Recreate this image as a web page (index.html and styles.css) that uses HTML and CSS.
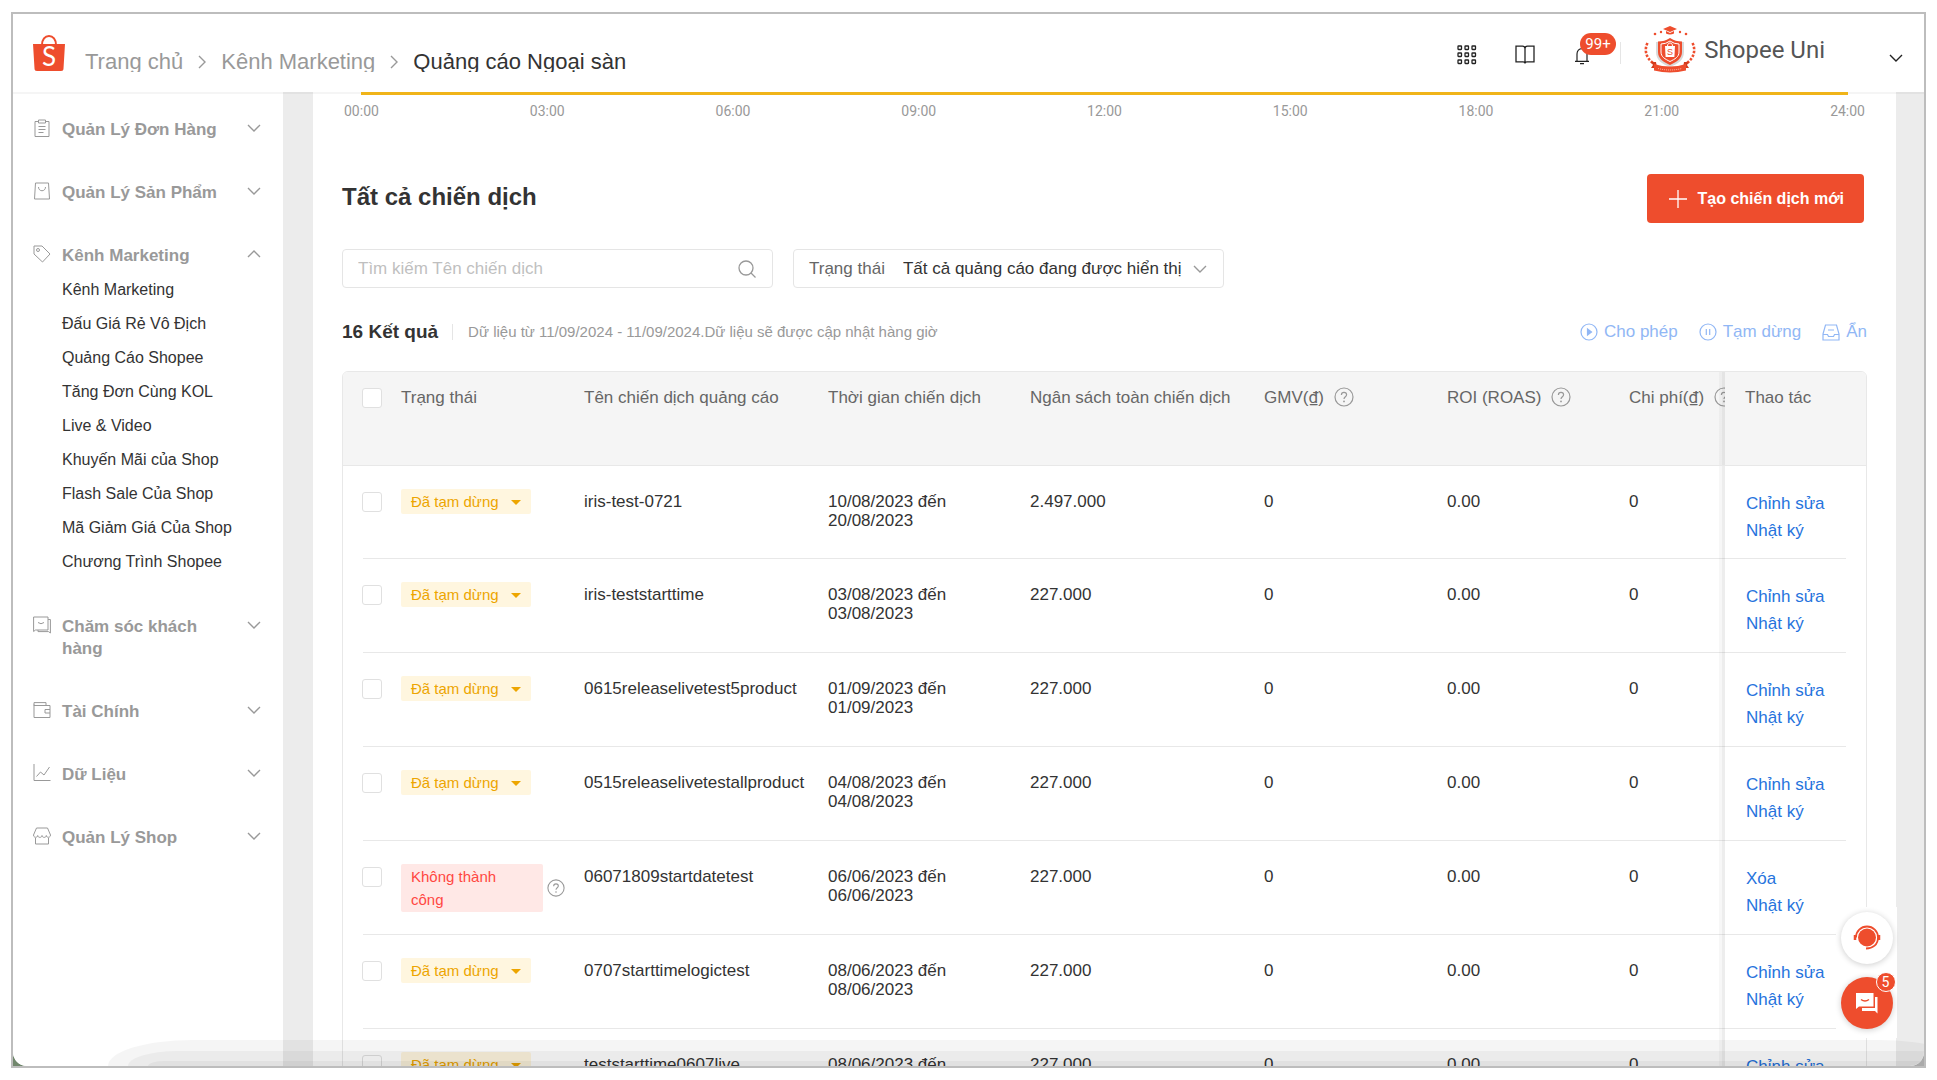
FILE: index.html
```html
<!DOCTYPE html>
<html lang="vi">
<head>
    <meta charset="UTF-8">
    <meta name="viewport" content="width=device-width, initial-scale=1.0">
    <title>Quảng cáo Ngoại sàn</title>
    <link rel="stylesheet" href="styles.css">
</head>
<body>

<!-- Shared icons -->
<svg class="icon-defs" aria-hidden="true">
    <symbol id="chevron-down" viewBox="0 0 14 14"><path d="M1 4l6 6 6-6" fill="none" stroke="currentColor" stroke-width="1.4"/></symbol>
    <symbol id="chevron-up" viewBox="0 0 14 14"><path d="M1 10l6-6 6 6" fill="none" stroke="currentColor" stroke-width="1.4"/></symbol>
    <symbol id="chevron-right" viewBox="0 0 10 14"><path d="M2 1l6 6-6 6" fill="none" stroke="currentColor" stroke-width="1.4"/></symbol>
    <symbol id="help" viewBox="0 0 20 20">
        <circle cx="10" cy="10" r="9" fill="none" stroke="currentColor" stroke-width="1.2"/>
        <path d="M7.4 8c0-1.6 1.1-2.6 2.6-2.6s2.6 1 2.6 2.4c0 1.9-2.6 2-2.6 4.2" fill="none" stroke="currentColor" stroke-width="1.2"/>
        <circle cx="10" cy="14.4" r=".9" fill="currentColor"/>
    </symbol>
</svg>

<div class="frame">
<div class="app">

    <header class="header">
        <a class="logo" href="#" aria-label="Shopee">
            <svg width="32" height="36" viewBox="0 0 32 36">
                <path d="M9 10C9 4.500 12 1 16 1s7 3.500 7 9" fill="none" stroke="#ee4d2d" stroke-width="2"/>
                <path d="M0 9h32l-1.500 24.500a2.500 2.500 0 0 1-2.500 2.500H4a2.500 2.500 0 0 1-2.500-2.500z" fill="#ee4d2d"/>
                <text x="16" y="31" class="logo-letter">S</text>
            </svg>
        </a>
        <nav class="breadcrumb">
            <a href="#">Trang chủ</a>
            <svg width="10" height="14"><use href="#chevron-right"/></svg>
            <a href="#">Kênh Marketing</a>
            <svg width="10" height="14"><use href="#chevron-right"/></svg>
            <span class="current">Quảng cáo Ngoại sàn</span>
        </nav>

        <div class="tools">
            <button class="tool" aria-label="Ứng dụng">
                <svg width="20" height="20" viewBox="0 0 20 20" fill="none" stroke="#222" stroke-width="1.300">
                    <rect x="1" y="1" width="3.500" height="3.500" rx=".5"/><rect x="8" y="1" width="3.500" height="3.500" rx=".5"/><rect x="15" y="1" width="3.500" height="3.500" rx=".5"/>
                    <rect x="1" y="8" width="3.500" height="3.500" rx=".5"/><rect x="8" y="8" width="3.500" height="3.500" rx=".5"/><rect x="15" y="8" width="3.500" height="3.500" rx=".5"/>
                    <rect x="1" y="15" width="3.500" height="3.500" rx=".5"/><rect x="8" y="15" width="3.500" height="3.500" rx=".5"/><rect x="15" y="15" width="3.500" height="3.500" rx=".5"/>
                </svg>
            </button>
            <button class="tool" aria-label="Hướng dẫn">
                <svg width="20" height="20" viewBox="0 0 20 20" fill="none" stroke="#222" stroke-width="1.300">
                    <path d="M10 3.500C10 2 9 1.200 7.500 1.200H1v15.600h7c1 0 2 .6 2 1.800 0-1.200 1-1.800 2-1.800h7V1.200h-6.500C11 1.200 10 2 10 3.500zM10 3.500v15"/>
                </svg>
            </button>
            <button class="tool" aria-label="Thông báo">
                <svg width="20" height="20" viewBox="0 0 20 20" fill="none" stroke="#222" stroke-width="1.200">
                    <path d="M2 16.400h14M4 16V9c0-3.200 2-5.400 5-5.400s5 2.200 5 5.400v7M7 18.600h4"/>
                </svg>
                <span class="count">99+</span>
            </button>
        </div>

        <div class="account">
            <svg width="54" height="48" viewBox="0 0 54 48">
                <path d="M27 0l7 3-7 3-7-3z" fill="#ee4d2d"/><path d="M23 5v2.500q4 2 8 0V5l-4 2z" fill="#ee4d2d"/>
                <g fill="#ee4d2d"><circle cx="12" cy="8" r="1.300"/><circle cx="18" cy="6" r="1.200"/><circle cx="37" cy="6" r="1.200"/><circle cx="43" cy="8" r="1.300"/></g>
                <path d="M13 16q8 0 14-4 6 4 14 4v10c0 8-6 12-14 15-8-3-14-7-14-15z" fill="#d9d9d9"/>
                <path d="M15 15.500q7 0 12-3.500 5 3.500 12 3.500V26c0 6-5 10-12 13-7-3-12-7-12-13z" fill="#ee4d2d"/>
                <path d="M18 18q5 0 9-3 4 3 9 3v8c0 5-4 7-9 9.500C22 33 18 31 18 26z" fill="none" stroke="#fff"/>
                <path d="M22 20h10l-.6 11h-8.800z" fill="#fff"/><path d="M24.500 20c0-4 5-4 5 0" fill="none" stroke="#fff"/>
                <text x="27" y="29" class="crest-letter">S</text>
                <g fill="none" stroke="#ee4d2d" stroke-width="2.600" stroke-dasharray="2.500 1.500">
                    <path d="M4.500 17C1 24 3 32 10 37"/><path d="M49.500 17c3.500 7 1.500 15-5.500 20"/>
                </g>
                <path d="M8 36h5l1 6H8l2-3zM46 36h-5l-1 6h6l-2-3z" fill="#d33c1e"/>
                <path d="M11 38q16 5 32 0v6.500q-16 4-32 0z" fill="#ee4d2d"/>
                <path d="M15 42.500q12 3 24 0" fill="none" stroke="#ffc5b8" stroke-dasharray="1 1"/>
            </svg>
            <span class="account-name">Shopee Uni</span>
        </div>
        <button class="tool account-toggle" aria-label="Tài khoản"><svg width="14" height="14"><use href="#chevron-down"/></svg></button>
    </header>

    <div class="body">

        <aside class="sidebar">
            <button class="menu-title">
                <svg class="menu-icon" viewBox="0 0 18 18"><path d="M5 2.500H2v15h14v-15h-3M5.500 1h7v3h-7zM5.500 7.500h7M5.500 10.500h7M5.500 13.500h5"/></svg>
                <span>Quản Lý Đơn Hàng</span>
                <svg class="menu-arrow"><use href="#chevron-down"/></svg>
            </button>
            <button class="menu-title">
                <svg class="menu-icon" viewBox="0 0 18 18"><path d="M2.500 1h13l1 16h-15zM5.500 5c0 5 7 5 7 0"/></svg>
                <span>Quản Lý Sản Phẩm</span>
                <svg class="menu-arrow"><use href="#chevron-down"/></svg>
            </button>
            <div>
                <button class="menu-title">
                    <svg class="menu-icon" viewBox="0 0 18 18"><path d="M1 1h8l8 8-7.500 8L1 9z"/><circle cx="5" cy="5" r="1.500"/></svg>
                    <span>Kênh Marketing</span>
                    <svg class="menu-arrow"><use href="#chevron-up"/></svg>
                </button>
                <ul class="submenu">
                    <li><a href="#">Kênh Marketing</a></li>
                    <li><a href="#">Đấu Giá Rẻ Vô Địch</a></li>
                    <li><a href="#">Quảng Cáo Shopee</a></li>
                    <li><a href="#">Tăng Đơn Cùng KOL</a></li>
                    <li><a href="#">Live &amp; Video</a></li>
                    <li><a href="#">Khuyến Mãi của Shop</a></li>
                    <li><a href="#">Flash Sale Của Shop</a></li>
                    <li><a href="#">Mã Giảm Giá Của Shop</a></li>
                    <li><a href="#">Chương Trình Shopee</a></li>
                </ul>
            </div>
            <button class="menu-title">
                <svg class="menu-icon" viewBox="0 0 18 18"><path d="M.6 1h14.400v13H2.500L.6 15.500zM15 3.500h2.400v13.500L15.500 15.600H5V14M5 6.500q3 2.500 6 0"/></svg>
                <span>Chăm sóc khách hàng</span>
                <svg class="menu-arrow"><use href="#chevron-down"/></svg>
            </button>
            <button class="menu-title">
                <svg class="menu-icon" viewBox="0 0 18 18"><path d="M1 3.500V16.500h16v-12H1V1.600h12v2.900M17 8.500h-5v3.500h5"/></svg>
                <span>Tài Chính</span>
                <svg class="menu-arrow"><use href="#chevron-down"/></svg>
            </button>
            <button class="menu-title">
                <svg class="menu-icon" viewBox="0 0 18 18"><path d="M1 0v16.500h16.500M3.500 12.500l4-4.500 3.500 3 5.500-8"/></svg>
                <span>Dữ Liệu</span>
                <svg class="menu-arrow"><use href="#chevron-down"/></svg>
            </button>
            <button class="menu-title">
                <svg class="menu-icon" viewBox="0 0 18 18"><path d="M3.500 1h11l3 7c0 3-4 3-4.200.5 0 2.500-4.200 2.500-4.300 0 0 2.500-4.200 2.500-4.300 0C4.500 11 .5 11 .5 8zM2.500 11v6h13v-6"/></svg>
                <span>Quản Lý Shop</span>
                <svg class="menu-arrow"><use href="#chevron-down"/></svg>
            </button>
        </aside>

        <main class="main">
            <div class="card">

                <!-- Bottom of the hourly chart -->
                <div class="chart-line"></div>
                <div class="chart-axis">
                    <span>00:00</span><span>03:00</span><span>06:00</span><span>09:00</span><span>12:00</span><span>15:00</span><span>18:00</span><span>21:00</span><span>24:00</span>
                </div>

                <div class="title-row">
                    <h1>Tất cả chiến dịch</h1>
                    <button class="create-btn">
                        <svg width="18" height="18" viewBox="0 0 18 18"><path d="M9 0v18M0 9h18" stroke="#fff" stroke-width="1.300"/></svg>
                        Tạo chiến dịch mới
                    </button>
                </div>

                <div class="filters">
                    <div class="field">
                        <input type="text" placeholder="Tìm kiếm Tên chiến dịch" aria-label="Tìm kiếm Tên chiến dịch">
                        <svg class="search-icon" width="18" height="18" viewBox="0 0 18 18"><circle cx="8" cy="8" r="7"/><path d="M13 13l4.500 4.500"/></svg>
                    </div>
                    <div class="field">
                        <label for="status">Trạng thái</label>
                        <select id="status">
                            <option>Tất cả quảng cáo đang được hiển thị</option>
                        </select>
                        <svg class="select-icon" width="14" height="14"><use href="#chevron-down"/></svg>
                    </div>
                </div>

                <div class="results">
                    <h2>16 Kết quả</h2>
                    <span class="results-info">Dữ liệu từ 11/09/2024 - 11/09/2024.Dữ liệu sẽ được cập nhật hàng giờ</span>
                    <div class="bulk">
                        <button>
                            <svg width="18" height="18" viewBox="0 0 18 18"><circle cx="9" cy="9" r="8"/><path d="M7.500 6v6l4-3z" fill="currentColor"/></svg>Cho phép
                        </button>
                        <button>
                            <svg width="18" height="18" viewBox="0 0 18 18"><circle cx="9" cy="9" r="8"/><path d="M7.300 6v6M10.700 6v6"/></svg>Tạm dừng
                        </button>
                        <button>
                            <svg width="18" height="18" viewBox="0 0 18 18"><path d="M1 11L3.500 2h11L17 11v6H1zM1 11.500h4.500l1 2h5l1-2H17M6 7h6"/></svg>Ẩn
                        </button>
                    </div>
                </div>

                <div class="table-box">
                    <table>
                        <colgroup>
                            <col class="col-check"><col class="col-status"><col class="col-name"><col class="col-time"><col class="col-budget"><col class="col-gmv"><col class="col-roi"><col class="col-cost"><col class="col-action">
                        </colgroup>
                        <thead>
                            <tr>
                                <th><input type="checkbox" aria-label="Chọn tất cả"></th>
                                <th>Trạng thái</th>
                                <th>Tên chiến dịch quảng cáo</th>
                                <th>Thời gian chiến dịch</th>
                                <th>Ngân sách toàn chiến dịch</th>
                                <th>GMV(<span class="dong">₫</span>)<svg class="help"><use href="#help"/></svg></th>
                                <th>ROI (ROAS)<svg class="help"><use href="#help"/></svg></th>
                                <th>Chi phí(<span class="dong">₫</span>)<svg class="help"><use href="#help"/></svg></th>
                                <th>Thao tác</th>
                            </tr>
                        </thead>
                        <tbody>
                            <tr>
                                <td><input type="checkbox" aria-label="Chọn iris-test-0721"></td>
                                <td class="status"><button class="tag paused">Đã tạm dừng</button></td>
                                <td>iris-test-0721</td>
                                <td>10/08/2023 đến<br>20/08/2023</td>
                                <td>2.497.000</td>
                                <td>0</td>
                                <td>0.00</td>
                                <td>0</td>
                                <td class="actions"><a href="#">Chỉnh sửa</a><a href="#">Nhật ký</a></td>
                            </tr>
                            <tr>
                                <td><input type="checkbox" aria-label="Chọn iris-teststarttime"></td>
                                <td class="status"><button class="tag paused">Đã tạm dừng</button></td>
                                <td>iris-teststarttime</td>
                                <td>03/08/2023 đến<br>03/08/2023</td>
                                <td>227.000</td>
                                <td>0</td>
                                <td>0.00</td>
                                <td>0</td>
                                <td class="actions"><a href="#">Chỉnh sửa</a><a href="#">Nhật ký</a></td>
                            </tr>
                            <tr>
                                <td><input type="checkbox" aria-label="Chọn 0615releaselivetest5product"></td>
                                <td class="status"><button class="tag paused">Đã tạm dừng</button></td>
                                <td>0615releaselivetest5product</td>
                                <td>01/09/2023 đến<br>01/09/2023</td>
                                <td>227.000</td>
                                <td>0</td>
                                <td>0.00</td>
                                <td>0</td>
                                <td class="actions"><a href="#">Chỉnh sửa</a><a href="#">Nhật ký</a></td>
                            </tr>
                            <tr>
                                <td><input type="checkbox" aria-label="Chọn 0515releaselivetestallproduct"></td>
                                <td class="status"><button class="tag paused">Đã tạm dừng</button></td>
                                <td>0515releaselivetestallproduct</td>
                                <td>04/08/2023 đến<br>04/08/2023</td>
                                <td>227.000</td>
                                <td>0</td>
                                <td>0.00</td>
                                <td>0</td>
                                <td class="actions"><a href="#">Chỉnh sửa</a><a href="#">Nhật ký</a></td>
                            </tr>
                            <tr>
                                <td><input type="checkbox" aria-label="Chọn 06071809startdatetest"></td>
                                <td class="status">
                                    <div class="failed-wrap">
                                        <span class="tag failed">Không thành công</span>
                                        <svg class="help"><use href="#help"/></svg>
                                    </div>
                                </td>
                                <td>06071809startdatetest</td>
                                <td>06/06/2023 đến<br>06/06/2023</td>
                                <td>227.000</td>
                                <td>0</td>
                                <td>0.00</td>
                                <td>0</td>
                                <td class="actions"><a href="#">Xóa</a><a href="#">Nhật ký</a></td>
                            </tr>
                            <tr>
                                <td><input type="checkbox" aria-label="Chọn 0707starttimelogictest"></td>
                                <td class="status"><button class="tag paused">Đã tạm dừng</button></td>
                                <td>0707starttimelogictest</td>
                                <td>08/06/2023 đến<br>08/06/2023</td>
                                <td>227.000</td>
                                <td>0</td>
                                <td>0.00</td>
                                <td>0</td>
                                <td class="actions"><a href="#">Chỉnh sửa</a><a href="#">Nhật ký</a></td>
                            </tr>
                            <tr>
                                <td><input type="checkbox" aria-label="Chọn teststarttime0607live"></td>
                                <td class="status"><button class="tag paused">Đã tạm dừng</button></td>
                                <td>teststarttime0607live</td>
                                <td>08/06/2023 đến<br>08/06/2023</td>
                                <td>227.000</td>
                                <td>0</td>
                                <td>0.00</td>
                                <td>0</td>
                                <td class="actions"><a href="#">Chỉnh sửa</a><a href="#">Nhật ký</a></td>
                            </tr>
                        </tbody>
                    </table>
                </div>

            </div>
        </main>
    </div>

    <div class="shade"></div>

    <!-- Floating support and chat buttons -->
    <div class="floating">
        <button class="float-btn support" aria-label="Hỗ trợ">
            <svg width="28" height="28" viewBox="0 0 28 28">
                <circle cx="14" cy="13.500" r="9" fill="#ee4d2d"/>
                <path d="M3 13.500a11 11 0 0 1 22 0c0 7-5 11-12 11" fill="none" stroke="#ee4d2d" stroke-width="1.800"/>
                <path d="M2 11v5M26 11v5" stroke="#ee4d2d" stroke-width="2.500"/>
            </svg>
        </button>
        <button class="float-btn chat" aria-label="Chat">
            <svg width="24" height="22" viewBox="0 0 24 22">
                <path d="M20 5h2.500v16.500L20 19H7v-3h13z" fill="#fff"/>
                <path d="M1 1h17.500v13.500H4L1 17z" fill="#fff"/>
                <path d="M6 7.500q4 3 8 0" fill="none" stroke="#ee4d2d" stroke-width="1.500"/>
            </svg>
            <span class="count">5</span>
        </button>
    </div>

</div>
</div>

</body>
</html>
```
FILE: styles.css
```css
* {
    box-sizing: border-box;
}

body {
    margin: 0;
    height: 100vh;
    padding: 12px 11px;
    background-color: #fff;
    font-family: "Liberation Sans", Arial, sans-serif;
    font-size: 17px;
    color: #333;
    overflow: hidden;
}

button {
    padding: 0;
    border: none;
    background: none;
    font: inherit;
    color: inherit;
    cursor: pointer;
}

a {
    color: inherit;
    text-decoration: none;
}

svg {
    display: block;
    flex-shrink: 0;
}

.icon-defs {
    position: absolute;
    width: 0;
    height: 0;
}

/* Window frame */
.frame {
    height: 100%;
    border: 2px solid #bdbdbd;
    background: linear-gradient(90deg, #71876d 50%, #aaa 50%);
}

.app {
    position: relative;
    display: flex;
    flex-direction: column;
    height: 100%;
    border-radius: 0 0 14px 14px;
    background-color: #fff;
    overflow: hidden;
}

/* Header */
.header {
    position: relative;
    z-index: 2;
    display: flex;
    flex-shrink: 0;
    align-items: center;
    height: 78px;
    padding: 0 21px 0 20px;
    background-color: #fff;
    box-shadow: 0 2px 0 rgba(0, 0, 0, 0.04);
}

.logo-letter {
    font-family: Lato, sans-serif;
    font-size: 26px;
    fill: #fff;
    text-anchor: middle;
}

.crest-letter {
    font-size: 9px;
    fill: #ee4d2d;
    text-anchor: middle;
}

.breadcrumb {
    display: flex;
    align-items: center;
    gap: 14px;
    padding: 18px 0 0 20px;
    font-size: 22px;
    line-height: 20px;
    color: #999;
    white-space: nowrap;
}

.breadcrumb a,
.breadcrumb span {
    overflow: hidden;
}

.breadcrumb .current {
    color: #333;
}

.tools {
    display: flex;
    gap: 38px;
    margin-left: auto;
    padding: 4px 27px 0 0;
}

.tool {
    position: relative;
    color: #222;
}

.count {
    position: absolute;
    top: -12px;
    left: 7px;
    padding: 0 5px;
    border-radius: 11px;
    background-color: #ee4d2d;
    color: #fff;
    font-family: Roboto, sans-serif;
    font-size: 15px;
    line-height: 22px;
}

.account {
    display: flex;
    align-items: center;
    gap: 7px;
    height: 22px;
    padding-left: 22px;
    border-left: 1px solid #e5e5e5;
}

.account svg,
.account-name {
    margin-bottom: 6px;
}

.account-name {
    font-family: Roboto, sans-serif;
    font-size: 24px;
    color: #555;
}

.account-toggle {
    margin-left: 64px;
    padding-top: 10px;
}

/* Page body */
.body {
    display: flex;
    flex: 1;
    min-height: 0;
}

/* Sidebar */
.sidebar {
    display: flex;
    flex-direction: column;
    flex-shrink: 0;
    gap: 41px;
    width: 270px;
    padding: 27px 22px 0 20px;
    background-color: #fff;
}

.menu-title {
    display: flex;
    align-items: flex-start;
    gap: 11px;
    width: 100%;
    font-weight: bold;
    line-height: 22px;
    color: #999;
    text-align: left;
}

.menu-title span {
    flex: 1;
    padding-right: 10px;
}

.menu-icon {
    width: 18px;
    height: 18px;
    fill: none;
    stroke: #999;
}

.menu-arrow {
    width: 14px;
    height: 14px;
    margin-top: 2px;
}

.submenu {
    margin: 6px 0 -4px;
    padding: 0 0 0 29px;
    list-style: none;
    font-size: 16px;
    line-height: 34px;
}

/* Main card */
.main {
    flex: 1;
    min-width: 0;
    padding: 0 28px 0 30px;
    background-color: #ececec;
}

.card {
    height: 100%;
    padding: 0 29px;
    background-color: #fff;
    overflow: hidden;
}

.chart-line {
    position: relative;
    z-index: 3;
    height: 3px;
    margin: 0 19px;
    background-color: #f0b419;
}

.chart-axis {
    display: flex;
    justify-content: space-between;
    padding: 8px 2px 0;
    font-family: Roboto, sans-serif;
    font-size: 14px;
    line-height: 16px;
    color: #999;
}

.title-row {
    display: flex;
    align-items: flex-start;
    justify-content: space-between;
    margin-top: 55px;
    padding-right: 3px;
}

h1 {
    margin: 0;
    font-size: 24px;
    line-height: 46px;
}

.create-btn {
    display: flex;
    align-items: center;
    gap: 10px;
    height: 49px;
    padding: 0 20px 0 22px;
    border-radius: 4px;
    background-color: #ee4d2d;
    color: #fff;
    font-size: 16px;
    font-weight: bold;
}

/* Search and status filter */
.filters {
    display: flex;
    gap: 20px;
    margin-top: 26px;
}

.field {
    display: flex;
    align-items: center;
    width: 431px;
    height: 39px;
    padding: 0 16px 0 15px;
    border: 1px solid #e5e5e5;
    border-radius: 4px;
}

.field input,
.field select {
    flex: 1;
    min-width: 0;
    padding: 0;
    border: none;
    outline: none;
    background: none;
    font: inherit;
    color: #333;
    appearance: none;
}

.field input::placeholder {
    color: #bfbfbf;
}

.field label {
    margin-right: 18px;
    color: #666;
}

.search-icon {
    fill: none;
    stroke: #999;
    stroke-width: 1.3;
}

.select-icon {
    color: #999;
}

/* Results line */
.results {
    display: flex;
    align-items: center;
    margin: 32px 0 27px;
    line-height: 24px;
}

h2 {
    margin: 0;
    font-size: 19px;
}

.results-info {
    margin-left: 14px;
    padding-left: 15px;
    border-left: 1px solid #e5e5e5;
    font-size: 15px;
    line-height: 16px;
    color: #999;
}

.bulk {
    display: flex;
    gap: 21px;
    margin-left: auto;
    color: #91b7f5;
}

.bulk button {
    display: flex;
    align-items: center;
    gap: 6px;
}

.bulk svg {
    fill: none;
    stroke: currentColor;
    stroke-width: 1.2;
}

/* Campaign table */
.table-box {
    border: 1px solid #e8e8e8;
    border-radius: 6px;
    overflow: hidden;
}

table {
    width: 100%;
    table-layout: fixed;
    border-collapse: collapse;
    line-height: 19px;
}

.col-check { width: 48px; }
.col-status { width: 183px; }
.col-time { width: 202px; }
.col-budget { width: 234px; }
.col-gmv { width: 183px; }
.col-roi { width: 182px; }
.col-cost { width: 106px; }
.col-action { width: 141px; }

th,
td {
    height: 94px;
    padding: 26px 0 0 10px;
    text-align: left;
    vertical-align: top;
    white-space: nowrap;
    overflow: hidden;
}

th {
    height: 93px;
    padding-top: 16px;
    background-color: #f5f5f5;
    border-bottom: 1px solid #e8e8e8;
    font-weight: normal;
    color: #666;
}

th:first-child,
td:first-child {
    padding-left: 19px;
}

th:last-child,
td:last-child {
    padding-left: 20px;
}

tbody tr {
    background: linear-gradient(#e8e8e8, #e8e8e8) no-repeat center bottom / calc(100% - 40px) 1px;
}

/* Shadow at the edge of the fixed column */
th:nth-child(8),
td:nth-child(8) {
    position: relative;
}

th:nth-child(8)::after,
td:nth-child(8)::after {
    content: "";
    position: absolute;
    top: 0;
    right: 0;
    bottom: 0;
    width: 6px;
    background: linear-gradient(90deg, rgba(0, 0, 0, 0.03) 50%, rgba(0, 0, 0, 0.07) 50%);
}

table input {
    display: block;
    width: 20px;
    height: 20px;
    margin: 0;
    border: 1px solid #e0e0e0;
    border-radius: 3px;
    background-color: #fff;
    appearance: none;
}

.dong {
    font-family: Roboto, sans-serif;
}

.help {
    display: inline-block;
    width: 20px;
    height: 20px;
    margin: -4px 0 -1px 10px;
    vertical-align: middle;
    color: #999;
}

.status {
    padding-top: 23px;
}

.tag {
    display: inline-block;
    padding: 1px 10px;
    border-radius: 2px;
    font-size: 15px;
    line-height: 23px;
}

.paused {
    background-color: #fff6df;
    color: #eda500;
}

.paused::after {
    content: "";
    display: inline-block;
    margin: 0 0 2px 12px;
    border: 5px solid transparent;
    border-top-color: #eda500;
    border-bottom: none;
}

.failed-wrap {
    display: flex;
    align-items: center;
    gap: 4px;
}

.failed-wrap .help {
    width: 18px;
    height: 18px;
    margin: 0;
}

.failed {
    width: 142px;
    padding-right: 30px;
    background-color: #ffe8e6;
    color: #ff4742;
    white-space: normal;
}

td.actions {
    padding: 24px 0 0 21px;
    line-height: 27px;
    color: #2673dd;
}

.actions a {
    display: block;
}

/* Soft shadow along the bottom edge */
.shade,
.shade::before,
.shade::after {
    position: absolute;
    right: -40px;
    bottom: 0;
    border-radius: 90px 90px 0 0 / 28px 28px 0 0;
    background-color: rgba(0, 0, 0, 0.04);
}

.shade {
    left: 95px;
    height: 26px;
}

.shade::before,
.shade::after {
    content: "";
    right: 0;
}

.shade::before {
    left: 20px;
    height: 15px;
}

.shade::after {
    left: 40px;
    height: 5px;
}

/* Floating buttons */
.floating {
    position: absolute;
    right: 27px;
    bottom: 28px;
    display: flex;
    flex-direction: column;
    align-items: center;
    gap: 13px;
    width: 61px;
    padding: 5px 0 9px;
    background-color: #fff;
}

.float-btn {
    position: relative;
    display: flex;
    align-items: center;
    justify-content: center;
    width: 52px;
    height: 52px;
    border-radius: 50%;
    box-shadow: 0 1px 6px rgba(0, 0, 0, 0.2);
}

.support {
    background-color: #fff;
}

.chat {
    background-color: #ee4d2d;
}

.chat .count {
    top: -5px;
    left: 35px;
    width: 20px;
    padding: 0;
    border: 1px solid #fff;
    font-size: 14px;
    line-height: 18px;
}
```
